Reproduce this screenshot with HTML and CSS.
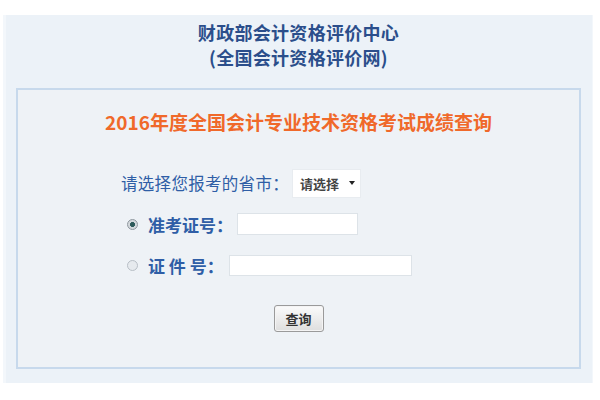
FILE: index.html
```html
<!DOCTYPE html>
<html lang="zh-CN">
<head>
<meta charset="utf-8">
<title>成绩查询</title>
<link rel="stylesheet" href="styles.css">
</head>
<body>
<div class="panel">
  <div class="header">
    <div class="h-line">财政部会计资格评价中心</div>
    <div class="h-line">(全国会计资格评价网)</div>
  </div>
  <div class="box">
    <div class="box-title">2016年度全国会计专业技术资格考试成绩查询</div>
    <div class="form">
      <div class="row row-select">
        <span class="label-plain">请选择您报考的省市：</span>
        <span class="select"><span class="sel-text">请选择</span><span class="arrow"></span></span>
      </div>
      <div class="row row-radio">
        <span class="radio checked"></span>
        <span class="label-bold">准考证号：</span>
        <span class="text-input w1"></span>
      </div>
      <div class="row row-radio row-3">
        <span class="radio"></span>
        <span class="label-bold">证 件 号：</span>
        <span class="text-input w2"></span>
      </div>
    </div>
    <div class="btn-row">
      <button class="btn" type="button">查询</button>
    </div>
  </div>
</div>
</body>
</html>
```

FILE: styles.css
```css
html, body {
  margin: 0;
  padding: 0;
  background: #ffffff;
}
body {
  font-family: "Noto Sans CJK SC", "Noto Sans", sans-serif;
  padding-top: 15px;
}
.panel {
  box-sizing: border-box;
  margin-left: 3px;
  width: 590px;
  height: 368px;
  background: #ecf2f8;
  border-left: 3px solid #f3f7fb;
  border-right: 1px solid #f3f7fb;
  padding: 0 11px 0 10px;
}
.header {
  padding-top: 5px;
  height: 73px;
  box-sizing: border-box;
  text-align: center;
  color: #2b4e8b;
  font-weight: bold;
  font-size: 18px;
  line-height: 25px;
  letter-spacing: 0.3px;
}
.box {
  box-sizing: border-box;
  height: 281px;
  border: 2px solid #c7d9ec;
  background: #eef2f6;
}
.box-title {
  margin-top: 19px;
  text-align: center;
  color: #f0692a;
  font-weight: bold;
  font-size: 19px;
  line-height: 26px;
}
.form {
  padding-left: 103px;
  display: flex;
  flex-direction: column;
}
.row {
  display: flex;
  align-items: center;
  height: 30px;
}
.row-select {
  margin-top: 33px;
}
.label-plain {
  color: #2f5ea6;
  font-size: 16.5px;
  letter-spacing: 0.3px;
  width: 171px;
}
.select {
  box-sizing: border-box;
  width: 69px;
  height: 29px;
  background: #ffffff;
  border: 1px solid #e8ecf0;
  display: flex;
  align-items: center;
  padding-left: 7px;
  gap: 10px;
}
.sel-text {
  font-size: 13px;
  color: #444;
  font-weight: bold;
}
.arrow {
  width: 0;
  height: 0;
  border-left: 3.5px solid transparent;
  border-right: 3.5px solid transparent;
  border-top: 4px solid #222;
}
.row-radio {
  margin-top: 11px;
  padding-left: 6px;
}
.row-3 {
  margin-top: 11px;
}
.radio {
  box-sizing: border-box;
  width: 11px;
  height: 11px;
  border-radius: 50%;
  border: 1px solid #b8bfc6;
  background: #e6eaee;
  margin-right: 10px;
}
.radio.checked {
  border-color: #8f989f;
  background: radial-gradient(circle, #2d5a5a 0, #2d5a5a 2.2px, #d3d8dc 2.8px);
}
.label-bold {
  color: #2f5ea6;
  font-size: 17px;
  font-weight: bold;
  margin-right: 4px;
  white-space: pre;
}
.text-input {
  box-sizing: border-box;
  display: block;
  background: #ffffff;
  border: 1px solid #dde3e8;
}
.w1 {
  width: 121px;
  height: 22px;
}
.w2 {
  width: 183px;
  height: 21px;
  margin-left: 1px;
}
.btn-row {
  margin-top: 25px;
  text-align: center;
}
.btn {
  width: 50px;
  height: 27px;
  border: 1px solid #9a9a9a;
  border-radius: 3px;
  background: linear-gradient(#fbfbfb, #dedede);
  font-family: "Noto Sans CJK SC", sans-serif;
  font-size: 13px;
  font-weight: bold;
  color: #333;
  padding: 0;
  box-shadow: inset 0 0 0 1px #f4f4f4;
}
```
